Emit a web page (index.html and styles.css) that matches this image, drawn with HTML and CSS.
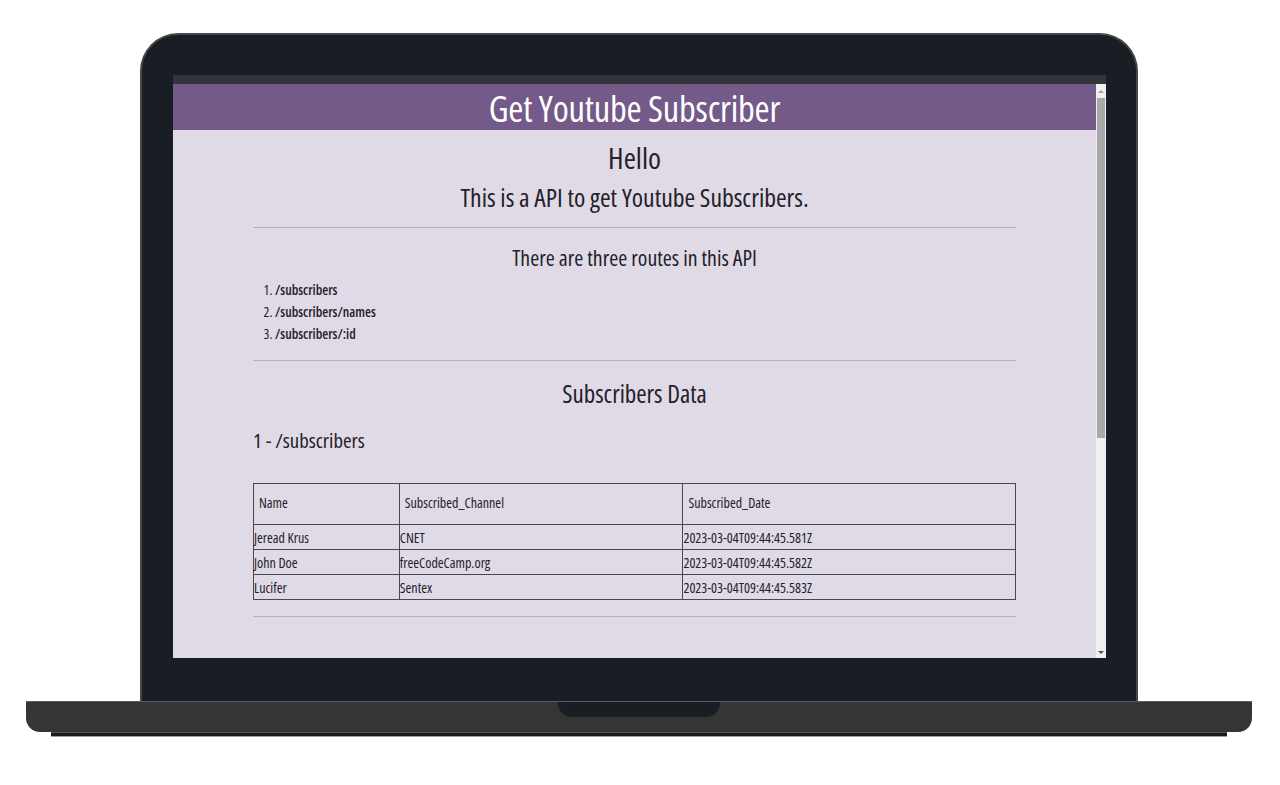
FILE: index.html
```html
<!DOCTYPE html>
<html lang="en">
<head>
<meta charset="utf-8">
<title>Get Youtube Subscriber</title>
<link rel="stylesheet" href="styles.css">
</head>
<body>
<div class="stage">
  <div class="laptop">
    <div class="lid">
      <div class="screen">
        <div class="chrome"></div>
        <div class="viewport">
          <div class="page">
            <header class="banner"><h1>Get Youtube Subscriber</h1></header>
            <main class="content">
              <h2 class="hello">Hello</h2>
              <p class="intro">This is a API to get Youtube Subscribers.</p>
              <hr class="rule rule-1">
              <h3 class="routes-title">There are three routes in this API</h3>
              <ol class="routes">
                <li><b>/subscribers</b></li>
                <li><b>/subscribers/names</b></li>
                <li><b>/subscribers/:id</b></li>
              </ol>
              <hr class="rule rule-2">
              <h3 class="data-title">Subscribers Data</h3>
              <h4 class="route-head">1 - /subscribers</h4>
              <table class="subs">
                <colgroup>
                  <col class="c-name"><col class="c-channel"><col class="c-date">
                </colgroup>
                <thead>
                  <tr><th>Name</th><th>Subscribed_Channel</th><th>Subscribed_Date</th></tr>
                </thead>
                <tbody>
                  <tr><td>Jeread Krus</td><td>CNET</td><td>2023-03-04T09:44:45.581Z</td></tr>
                  <tr><td>John Doe</td><td>freeCodeCamp.org</td><td>2023-03-04T09:44:45.582Z</td></tr>
                  <tr><td>Lucifer</td><td>Sentex</td><td>2023-03-04T09:44:45.583Z</td></tr>
                </tbody>
              </table>
              <hr class="rule rule-3">
            </main>
          </div>
          <div class="scrollbar">
            <span class="arrow up"></span>
            <span class="thumb"></span>
            <span class="arrow down"></span>
          </div>
        </div>
      </div>
    </div>
    <div class="base">
      <div class="notch"></div>
    </div>
    <div class="foot"></div>
  </div>
</div>
</body>
</html>
```

FILE: styles.css
```css
* { box-sizing: border-box; }
html, body { margin: 0; padding: 0; background: #ffffff; }
body { width: 1280px; height: 785px; overflow: hidden; font-family: "Open Sans", "Noto Sans", sans-serif; }

.stage { display: flex; justify-content: center; padding: 33px 2px 0 0; }
.laptop { display: flex; flex-direction: column; align-items: center; width: 1226px; }

.lid {
  width: 998px; height: 668px;
  background: #181e24;
  border: 2px solid #45474a; border-bottom: none;
  border-radius: 38px 38px 0 0;
  padding: 40px 30px 0 31px;
}
.screen { width: 933px; height: 583px; display: flex; flex-direction: column; background: #e0dae6; }
.chrome { height: 9px; background: #343538; flex: none; }
.viewport { flex: 1; display: flex; min-height: 0; }
.page { flex: 1; overflow: hidden; background: #e0dae6; color: #23202a; font-stretch: 75%; }

.scrollbar { width: 10px; flex: none; background: #f0f0f0; display: flex; flex-direction: column; align-items: center; padding-top: 6px; }
.arrow { width: 0; height: 0; border-left: 3px solid transparent; border-right: 3px solid transparent; flex: none; }
.arrow.up { border-bottom: 3px solid #a3a3a3; }
.arrow.down { border-top: 3px solid #505050; margin-top: auto; margin-bottom: 4px; }
.thumb { width: 8px; height: 340px; background: #a9a9a9; margin-top: 5px; flex: none; }

.banner { height: 46px; background: #735a88; display: flex; justify-content: center; align-items: center; padding-top: 3px; }
.banner h1 { margin: 0; color: #fff; font-weight: 500; font-size: 36.5px; line-height: 1.2; letter-spacing: -0.2px; }

.content { width: 763px; margin: 0 auto; text-align: center; }
.content h2, .content h3, .content h4, .content p { margin: 0; font-weight: 400; }
.hello { margin-top: 13px !important; font-size: 29.5px; line-height: 30px; }
.intro { margin-top: 10px !important; font-size: 25.7px; line-height: 30px; }
.rule { border: none; border-top: 1px solid #b7b0bd; margin: 0; height: 0; }
.rule-1 { margin-top: 14px; }
.routes-title { margin-top: 17px !important; font-size: 21.8px; line-height: 26px; }
.routes { margin: 8px 0 0; padding-left: 22px; text-align: left; font-size: 13.7px; line-height: 22px; }
.routes li b { font-weight: 650; }
.rule-2 { margin-top: 15px; }
.data-title { margin-top: 17px !important; font-size: 25px; line-height: 30px; }
.route-head { margin-top: 19px !important; font-size: 20.8px; line-height: 26px; text-align: left; }

.subs { margin-top: 30px; width: 763px; border-collapse: collapse; text-align: left; font-size: 14px; border: 1px solid #4a4750; }
.c-name { width: 146px; }
.c-channel { width: 284px; }
.c-date { width: 333px; }
.subs th, .subs td { border: 1px solid #4a4750; }
.subs th { height: 41px; font-weight: 400; padding: 0 5px 4px; }
.subs td { height: 25px; padding: 0; }
.rule-3 { margin-top: 16px; }

.base {
  width: 1226px; height: 31px;
  background: #353535;
  border-top: 1px solid #5b5d60;
  border-radius: 0 0 14px 14px;
  display: flex; justify-content: center;
}
.notch { width: 162px; height: 15px; background: #181e24; border-radius: 0 0 14px 14px; }
.foot { width: 1176px; height: 5px; background: #181e24; border-top: 1px solid #505356; border-bottom: 1px solid #9aa0a6; }
```
